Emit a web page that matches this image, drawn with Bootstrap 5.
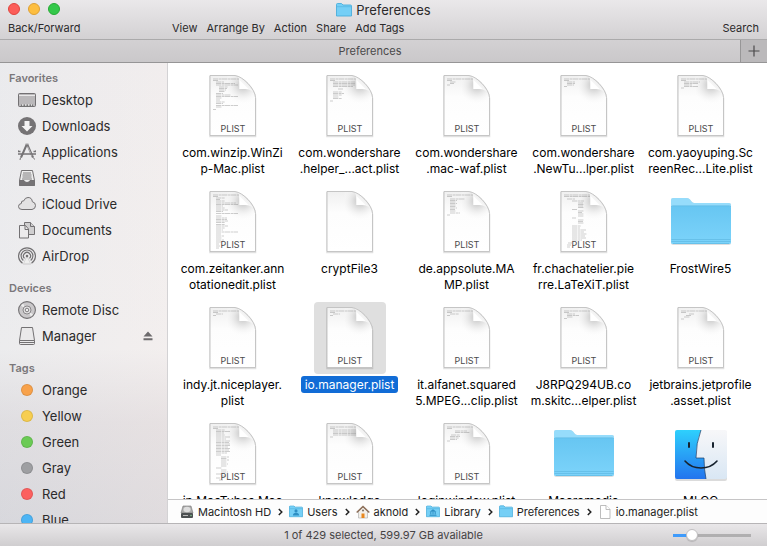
<!DOCTYPE html>
<html lang="en">
<head>
<meta charset="utf-8">
<meta name="viewport" content="width=device-width, initial-scale=1">
<title>Preferences</title>
<link href="https://cdn.jsdelivr.net/npm/bootstrap@5.3.0/dist/css/bootstrap.min.css" rel="stylesheet">
<style>
body { font-family: Inter, "Liberation Sans", sans-serif; font-size: 12px; line-height: 16px; color: #000; background: #fff; }
button { font: inherit; color: inherit; border: 0; background: none; padding: 0; }
a { color: inherit; text-decoration: none; }
svg { display: block; flex: none; }
.titlebar { background: linear-gradient(#eae8ea, #d3d1d3); color: #2b2a2b; padding-bottom: 2px; }
.window-title { height: 19px; font-size: 13px; }
.lights { left: 8px; top: 3px; gap: 8px; }
.light { width: 12px; height: 12px; border-radius: 50%; border: 1px solid #e0443e; background: #fc5d59; }
.light.min { background: #fdbe40; border-color: #dea034; }
.light.max { background: #34c84a; border-color: #27aa35; }
.tools { height: 18px; padding: 0 8px; gap: 9px; font-size: 11px; }
.back-forward { width: 155px; }
.tabs { height: 24px; border-top: 1px solid #abaaab; border-bottom: 1px solid #969596; background: linear-gradient(#d3d1d3, #cac8ca); color: #4a494a; font-size: 11px; }
.add-tab { width: 27px; background: #bbb9bb; border-left: 1px solid #979697; }
.sidebar { width: 168px; padding-top: 6px; border-right: 1px solid #d3d2d4; color: #2b2a2b; font-size: 13px;
  background: linear-gradient(90deg, rgba(214,218,226,.22), rgba(245,232,230,.25)), linear-gradient(#f0eff0 0, #f2f1f1 62%, #e2dfe1 78%, #d8d7db 100%); }
.sidebar h2 { font-size: 11px; line-height: 18px; font-weight: 600; color: #7a777a; margin: 0; padding-left: 9px; }
.sidebar ul + h2 { margin-top: 10px; }
.sidebar li { height: 26px; padding: 0 14px 0 18px; }
.sidebar a { gap: 6px; height: 26px; }
.tag-dot { width: 12px; height: 12px; margin: 0 3px; border-radius: 50%; border: 1px solid rgba(0,0,0,.1); }
.orange { background: #f8a24b; } .yellow { background: #f7ce50; } .green { background: #6bcb55; }
.gray { background: #9e9fa2; } .red { background: #fc605f; } .blue { background: #4db5f5; }
.files { display: grid; grid-template-columns: repeat(5, 1fr); grid-auto-rows: 116px; padding: 7px 8px 0 6px; }
.file { display: flex; flex-direction: column; align-items: center; text-align: center; }
.thumb { width: 72px; height: 72px; border-radius: 4px; padding-top: 4px; display: flex; justify-content: center; align-items: flex-start; margin-bottom: 2px; }
.thumb.low { padding-top: 12px; }
.label { padding: 1px 4px 0; white-space: nowrap; border-radius: 3px; }
.selected .thumb { background: #dfdfdf; }
.selected .label { background: #116cd6; color: #fff; }
.pathbar { height: 24px; border-top: 1px solid #c6c5c6; background: #fdfdfd; padding: 0 12px; font-size: 11px; color: #232323; }
.crumb { gap: 4px; }
.chev { margin: 0 6px 0 7px; }
.status { height: 23px; border-top: 1px solid #b6b4b6; background: linear-gradient(#e9e7e9, #d0ced0); font-size: 11px; color: #454345; padding: 0 16px; }
.zoom-slider { appearance: none; -webkit-appearance: none; width: 78px; height: 14px; margin: 0; background: linear-gradient(#3f9bfb, #3f9bfb) 0 50% / 20px 3px no-repeat, linear-gradient(#b0afb0, #b0afb0) 0 50% / 100% 3px no-repeat; }
.zoom-slider::-webkit-slider-thumb { -webkit-appearance: none; width: 12px; height: 12px; border-radius: 50%; background: #fff; border: 1px solid #c2c0c2; box-shadow: 0 1px 1px rgba(0,0,0,.15); }
.txt { stroke: #777; stroke-width: .6; stroke-dasharray: 5 .6 3 .4; fill: none; opacity: .6; }
.ext { font-size: 9px; fill: #4a4a4a; text-anchor: middle; }
</style>
<script src="https://cdn.jsdelivr.net/npm/bootstrap@5.3.0/dist/js/bootstrap.bundle.min.js"></script>
</head>
<body class="vh-100 d-flex flex-column overflow-hidden">

<svg width="0" height="0" class="position-absolute" aria-hidden="true">
  <defs>
    <linearGradient id="gPage" x1="0" y1="0" x2="0" y2="1"><stop offset="0" stop-color="#f0f0f0"/><stop offset=".35" stop-color="#fdfdfd"/><stop offset="1" stop-color="#fff"/></linearGradient>
    <radialGradient id="gCurl" gradientUnits="userSpaceOnUse" cx="34" cy="11" r="20"><stop offset="0" stop-color="#c2c2c2"/><stop offset=".4" stop-color="#e4e4e4"/><stop offset="1" stop-color="#fff" stop-opacity="0"/></radialGradient>
    <linearGradient id="gFold" x1="0" y1="1" x2="1" y2="0"><stop offset="0" stop-color="#fff"/><stop offset=".5" stop-color="#f4f4f4"/><stop offset="1" stop-color="#ccc"/></linearGradient>
    <linearGradient id="gFolder" x1="0" y1="0" x2="0" y2="1"><stop offset="0" stop-color="#67c6f2"/><stop offset="1" stop-color="#7cd3fa"/></linearGradient>
    <linearGradient id="gFace" x1="0" y1="0" x2="0" y2="1"><stop offset="0" stop-color="#2ed0fd"/><stop offset="1" stop-color="#2374ee"/></linearGradient>
    <linearGradient id="gFaceR" x1="0" y1="0" x2="0" y2="1"><stop offset="0" stop-color="#f7f7f9"/><stop offset="1" stop-color="#d9e7f4"/></linearGradient>
  </defs>
  <symbol id="page" viewBox="0 0 48 64">
    <path d="M1 2.500h25c8 1 20 13 20.500 22v38h-45.500z" fill="none" stroke="#000" stroke-opacity=".12" stroke-width="1.600"/>
    <path d="M1 1.500h25c8 1 20 13 20.500 22v38h-45.500z" fill="url(#gPage)"/>
    <path d="M1 1.500h25c8 1 20 13 20.500 22v12h-28v-34z" fill="url(#gCurl)"/>
    <path d="M28.500 2c2 2 2 8 2 13 5-.5 10 0 14 3-3-6-10-14-16-16z" fill="url(#gFold)"/>
    <path d="M30.500 6v9h9z" fill="#fff"/>
    <path d="M1 1.500h25c8 1 20 13 20.500 22v38h-45.500z" fill="none" stroke="#c0c0c0" stroke-width=".9"/>
  </symbol>
  <symbol id="folder" viewBox="0 0 60 48">
    <path d="M0 45V2q0-2 2-2h14q2 0 3 1.500l2 2.500q1 1 2.500 1H58q2 0 2 2v38q0 2-2 2H2q-2 0-2-2z" fill="#000" opacity=".13"/>
    <path d="M0 44V2q0-2 2-2h14q2 0 3 1.500l2 2.500q1 1 2.500 1H58q2 0 2 2v37q0 2-2 2H2q-2 0-2-2z" fill="#96dcfb"/>
    <path d="M0 44V9.500Q0 8 2 8h56q2 0 2 1.500V44q0 2-2 2H2q-2 0-2-2z" fill="url(#gFolder)"/>
    <path d="M0 9q.500-1.200 2-1.200h56q1.500 0 2 1.200M.500 41.500h59M.500 43.500h59M2 45.500h56" fill="none" stroke="#5eb9e2" stroke-width=".7"/>
  </symbol>
  <symbol id="smallFolder" viewBox="0 0 16 14">
    <path d="M.5 13V1.500Q.5.500 1.500.500h4l1.500 1.500h7.500q1 0 1 1v10z" fill="#75cff6" stroke="#4aaedb" stroke-width=".9"/>
    <path d="M1 3.700h14" stroke="#57b7e2" stroke-width=".8"/>
  </symbol>
  <symbol id="chevron" viewBox="0 0 5 8"><path d="M.8 1l3 3-3 3" fill="none" stroke="#222" stroke-width="1.500"/></symbol>
</svg>

<header class="titlebar flex-shrink-0">
  <div class="window-title position-relative d-flex justify-content-center align-items-center gap-1">
    <div class="lights position-absolute d-flex">
      <button class="light" aria-label="Close"></button><button class="light min" aria-label="Minimize"></button><button class="light max" aria-label="Zoom"></button>
    </div>
    <svg width="16" height="14"><use href="#smallFolder"/></svg>
    <span>Preferences</span>
  </div>
  <div class="tools d-flex align-items-center">
    <button class="back-forward text-start">Back/Forward</button>
    <button>View</button><button>Arrange By</button><button>Action</button><button>Share</button><button>Add Tags</button>
    <button class="ms-auto">Search</button>
  </div>
</header>

<div class="tabs d-flex flex-shrink-0">
  <button class="flex-grow-1">Preferences</button>
  <button class="add-tab d-flex align-items-center justify-content-center" aria-label="New tab"><svg width="12" height="12"><path d="M6 .5v11M.5 6h11" stroke="#4b4a4b" stroke-width="1.200"/></svg></button>
</div>

<div class="d-flex flex-grow-1 overflow-hidden">
  <nav class="sidebar flex-shrink-0 overflow-hidden">
    <h2>Favorites</h2>
    <ul class="list-unstyled mb-0">
      <li><a href="#" class="d-flex align-items-center"><svg width="18" height="18" fill="none" stroke="#737173"><rect x=".5" y="2.500" width="17" height="13" rx="1" fill="#bab8ba"/><path d="M1 4.500h16" stroke="#e9e8e9"/><path d="M3 13.500h12v2h-12z" fill="#777" stroke="none"/><path d="M4 14h1.500M7 14h1.500M10 14h1.500M13 14h1" stroke="#eee" stroke-width="1.600"/></svg>Desktop</a></li>
      <li><a href="#" class="d-flex align-items-center"><svg width="18" height="18"><circle cx="9" cy="9" r="9" fill="#757375"/><path d="M6.500 4h5v5h3L9 14.500 3.500 9h3z" fill="#f4f3f4"/></svg>Downloads</a></li>
      <li><a href="#" class="d-flex align-items-center"><svg width="18" height="18" fill="none" stroke="#757375"><path d="M8.500 2L3 14.500M9.500 2L15 14.500" stroke-width="2"/><path d="M9.700 3.500l4.300 9.500" stroke="#dddcdd" stroke-width=".6"/><path d="M0 8.500h2.500M15.500 8.500H18M0 11h18" stroke-width="1.300"/><path d="M.5 7.500L2 9M17.500 7.500L16 9M7.500 1.200h3M2.500 14.500l-.5 2.500M15.500 14.500l1 2"/></svg>Applications</a></li>
      <li><a href="#" class="d-flex align-items-center"><svg width="18" height="18" fill="none" stroke="#737173"><path d="M3.500 1.500h11l2 10v4.500q0 .5-.5.500h-14q-.5 0-.5-.5V11.500z" fill="#eee"/><path d="M1.500 11.500H6q.5 2 3 2t3-2h4.500v5h-15z" fill="#757375"/><path d="M5 4h8M4.500 6h9M4.500 8h9M4 10h10" stroke-width=".9"/></svg>Recents</a></li>
      <li><a href="#" class="d-flex align-items-center"><svg width="18" height="18" fill="#e3e2e3" stroke="#737173"><path d="M4 14.500Q.5 14.500.5 11.500q0-2.600 2.800-3Q3 5.500 5.800 5.800 7 2.500 10 2.500q4 0 4.300 4.200 3.200.6 3.200 3.900 0 3.400-3.500 3.900z"/></svg>iCloud Drive</a></li>
      <li><a href="#" class="d-flex align-items-center"><svg width="18" height="18" fill="#d0cfd0" stroke="#737173"><path d="M6.500 1.500h6l4 4v8h-10z"/><path d="M12.500 1.500v4h4"/><path d="M1.500 4.500h6l3 3.500v9h-9z" fill="#ecebec"/><path d="M7 4.500v4h3.500" fill="none"/></svg>Documents</a></li>
      <li><a href="#" class="d-flex align-items-center"><svg width="18" height="18" fill="none" stroke="#737173" stroke-width="1.200"><path d="M4.500 16.300a8.400 8.400 0 1 1 9 0M5.300 13.500a5.900 5.900 0 1 1 7.400 0M6.500 11.400a3.500 3.500 0 1 1 5 0"/><path d="M9 8l-4 9.500h8z" fill="#c9c8c9" stroke="none"/><path d="M9 10L5.800 16.500h6.400z" fill="#eee" stroke="none"/><circle cx="9" cy="9" r="1.300" fill="#737173" stroke="none"/></svg>AirDrop</a></li>
    </ul>
    <h2>Devices</h2>
    <ul class="list-unstyled mb-0">
      <li><a href="#" class="d-flex align-items-center"><svg width="18" height="18" fill="none" stroke="#737173"><circle cx="9" cy="9" r="8.400" fill="#cac8ca" stroke-width="1.100"/><path d="M9 9L3 4.500 5 2.500zM9 9l6 4.500-2 2z" fill="#eee" stroke="none"/><circle cx="9" cy="9" r="4" fill="#e5e4e5" stroke-width=".8"/><circle cx="9" cy="9" r="1.800" fill="#eee" stroke-width=".9"/></svg>Remote Disc</a></li>
      <li class="d-flex align-items-center justify-content-between"><a href="#" class="d-flex align-items-center"><svg width="18" height="18" fill="#eae9ea" stroke="#737173"><path d="M3.500.500h11l2 13v3q0 1-1 1h-13q-1 0-1-1v-3z"/><path d="M1.500 13.500h15M2 15.500h14" fill="none"/></svg>Manager</a><button aria-label="Eject Manager"><svg width="10" height="10" fill="#6d6b6d"><path d="M5 .5L9.500 5.500h-9zM.5 7.300h9v2h-9z"/></svg></button></li>
    </ul>
    <h2>Tags</h2>
    <ul class="list-unstyled mb-0">
      <li><a href="#" class="d-flex align-items-center"><span class="tag-dot orange"></span>Orange</a></li>
      <li><a href="#" class="d-flex align-items-center"><span class="tag-dot yellow"></span>Yellow</a></li>
      <li><a href="#" class="d-flex align-items-center"><span class="tag-dot green"></span>Green</a></li>
      <li><a href="#" class="d-flex align-items-center"><span class="tag-dot gray"></span>Gray</a></li>
      <li><a href="#" class="d-flex align-items-center"><span class="tag-dot red"></span>Red</a></li>
      <li><a href="#" class="d-flex align-items-center"><span class="tag-dot blue"></span>Blue</a></li>
    </ul>
  </nav>

  <main class="flex-grow-1 d-flex flex-column overflow-hidden">
    <div class="files flex-grow-1 overflow-hidden">
      <a href="#" class="file"><span class="thumb"><svg width="48" height="64"><use href="#page"/><path class="txt" d="M4 5h26M4 6.500h5M7 8h8M7 9.500h19M7 11h22M10 13h9M10 14.500h8M10 16h7M10 17.500h6M7 19.500h7M7 21h15M7 22.500h22M7 24h6M7 26h4M7 28h9M7 29.500h7M7 31.500h22M7 33h6M4 35.500h3"/><text class="ext" x="24" y="58">PLIST</text></svg></span><span class="label">com.winzip.WinZi<br>p-Mac.plist</span></a>
      <a href="#" class="file"><span class="thumb"><svg width="48" height="64"><use href="#page"/><path class="txt" d="M4 5h26M4 6.500h5M7 8h22M7 9.500h22M7 11h22M7 12.500h20M12 15h5M7 18h9M7 19.500h11M7 21h9M7 23h6M7 24.500h9M4 27h3"/><text class="ext" x="24" y="58">PLIST</text></svg></span><span class="label">com.wondershare<br>.helper_...act.plist</span></a>
      <a href="#" class="file"><span class="thumb"><svg width="48" height="64"><use href="#page"/><path class="txt" d="M4 5h26M4 6.500h5M7 8h6M7 9.500h4M4 11h3"/><text class="ext" x="24" y="58">PLIST</text></svg></span><span class="label">com.wondershare<br>.mac-waf.plist</span></a>
      <a href="#" class="file"><span class="thumb"><svg width="48" height="64"><use href="#page"/><path class="txt" d="M4 5h26M4 6.500h5M7 8h8M7 9.500h8M7 11h7M4 12.500h3"/><text class="ext" x="24" y="58">PLIST</text></svg></span><span class="label">com.wondershare<br>.NewTu...lper.plist</span></a>
      <a href="#" class="file"><span class="thumb"><svg width="48" height="64"><use href="#page"/><path class="txt" d="M4 5h26M4 6.500h5M7 8h16M7 9.500h14M7 11h8M7 12.500h14M4 14h3"/><text class="ext" x="24" y="58">PLIST</text></svg></span><span class="label">com.yaoyuping.Sc<br>reenRec...Lite.plist</span></a>

      <a href="#" class="file"><span class="thumb"><svg width="48" height="64"><use href="#page"/><path class="txt" d="M4 5h26M4 6.500h5M7 8h9M7 9.500h4M7 11h9M7 13h20M7 14.500h22M7 16h7M7 18h9M7 20h12M7 21.500h7M7 23.500h22M7 26h6M7 28h11M7 29.500h11M7 31h12M7 32.500h9M7 34.500h9M7 36h12M7 38h9M7 40h7M7 42h22M7 44h5M7 46h8M7 48h6M7 50h8M7 52h5M7 54h3M7 56h4M7 58h3"/><text class="ext" x="24" y="58">PLIST</text></svg></span><span class="label">com.zeitanker.ann<br>otationedit.plist</span></a>
      <a href="#" class="file"><span class="thumb"><svg width="48" height="64"><use href="#page"/></svg></span><span class="label">cryptFile3</span></a>
      <a href="#" class="file"><span class="thumb"><svg width="48" height="64"><use href="#page"/><path class="txt" d="M4 5h26M4 6.500h5M7 9h15M7 10.500h7M7 12h6M7 13.500h7M7 15h6M7 16.500h6M7 18h7M7 19.500h5M7 21h6M7 23h10M4 25h3"/><text class="ext" x="24" y="58">PLIST</text></svg></span><span class="label">de.appsolute.MA<br>MP.plist</span></a>
      <a href="#" class="file"><span class="thumb"><svg width="48" height="64"><use href="#page"/><path class="txt" d="M4 5h26M4 6.500h26M7 9h8M12 11h12M18 13h5M18 14.500h6M18 16h5M18 17.500h6M12 19.500h5M18 21h6M18 22.500h4M18 24h6M18 26h6M12 28h4M18 30h6M18 31.500h5M18 33h6M12 36h9M12 38h8M12 40h14M12 42h12M12 44h15M12 46h13M12 48h14M12 50h10M8 53h4M7 55h4M7 57h3"/><text class="ext" x="24" y="58">PLIST</text></svg></span><span class="label">fr.chachatelier.pie<br>rre.LaTeXiT.plist</span></a>
      <a href="#" class="file"><span class="thumb low"><svg width="60" height="48"><use href="#folder"/></svg></span><span class="label">FrostWire5</span></a>

      <a href="#" class="file"><span class="thumb"><svg width="48" height="64"><use href="#page"/><path class="txt" d="M4 5h26M4 6.500h5M7 8h7M4 9.500h3"/><text class="ext" x="24" y="58">PLIST</text></svg></span><span class="label">indy.jt.niceplayer.<br>plist</span></a>
      <a href="#" class="file selected"><span class="thumb"><svg width="48" height="64"><use href="#page"/><path class="txt" d="M4 5h26M4 6.500h5M7 8h7M4 9.500h3"/><text class="ext" x="24" y="58">PLIST</text></svg></span><span class="label">io.manager.plist</span></a>
      <a href="#" class="file"><span class="thumb"><svg width="48" height="64"><use href="#page"/><path class="txt" d="M4 5h26M4 6.500h5M7 8h9M4 9.500h3"/><text class="ext" x="24" y="58">PLIST</text></svg></span><span class="label">it.alfanet.squared<br>5.MPEG...clip.plist</span></a>
      <a href="#" class="file"><span class="thumb"><svg width="48" height="64"><use href="#page"/><path class="txt" d="M4 5h26M4 6.500h5M7 8h8M7 9.500h12M7 11h6M4 12.500h3"/><text class="ext" x="24" y="58">PLIST</text></svg></span><span class="label">J8RPQ294UB.co<br>m.skitc...elper.plist</span></a>
      <a href="#" class="file"><span class="thumb"><svg width="48" height="64"><use href="#page"/><path class="txt" d="M4 5h26M4 6.500h5M12 8h5M9 9.500h5M7 11h6M4 13h3"/><text class="ext" x="24" y="58">PLIST</text></svg></span><span class="label">jetbrains.jetprofile<br>.asset.plist</span></a>

      <a href="#" class="file"><span class="thumb"><svg width="48" height="64"><use href="#page"/><path class="txt" d="M4 5h26M4 6.500h5M7 8h9M7 9.500h14M7 11h8M7 13h9M7 15h14M7 17h10M7 19h14M7 20.500h13M7 22h14M7 23.500h14M7 25h12M7 26.500h14M7 28h13M7 29.500h14M7 31h11M7 33h5M12 35h8M12 36.500h6M12 38h8M12 40h6M12 42h7M12 44h6M7 46h6M12 48h6M12 50h7M7 52h5M12 54h5M7 56h4M10 58h4"/><text class="ext" x="24" y="58">PLIST</text></svg></span><span class="label">jp.MacTubes.Mac</span></a>
      <a href="#" class="file"><span class="thumb"><svg width="48" height="64"><use href="#page"/><path class="txt" d="M4 5h26M4 6.500h5M7 8h23M7 10h23M7 11.500h23M7 13h23M4 15h3"/><text class="ext" x="24" y="58">PLIST</text></svg></span><span class="label">knowledge</span></a>
      <a href="#" class="file"><span class="thumb"><svg width="48" height="64"><use href="#page"/><path class="txt" d="M4 5h26M4 6.500h5M12 9h12M12 10.500h15M8 13h9M7 14.500h10M7 16h9M7 17.500h7M4 19h3"/><text class="ext" x="24" y="58">PLIST</text></svg></span><span class="label">loginwindow.plist</span></a>
      <a href="#" class="file"><span class="thumb low"><svg width="60" height="48"><use href="#folder"/></svg></span><span class="label">Macromedia</span></a>
      <a href="#" class="file"><span class="thumb low"><svg width="54" height="52"><rect x="1" y="1" width="52" height="50" rx="2" fill="#000" opacity=".14"/><rect x="1" y="0" width="52" height="49" rx="2" fill="url(#gFaceR)"/><path d="M27 0Q22 13 22 28h8q0 11 2 21H3q-2 0-2-2V2q0-2 2-2z" fill="url(#gFace)"/><path d="M27 0Q22 13 22 28h8q0 11 2 21" fill="none" stroke="#1d3e68" stroke-width=".7"/><path d="M15 13v4M39 13v4" stroke="#17222e" stroke-width="2" stroke-linecap="round"/><path d="M11 31q6 7 16 7t16-7" fill="none" stroke="#17222e" stroke-width="1.600" stroke-linecap="round"/></svg></span><span class="label">MLCC</span></a>
    </div>

    <nav class="pathbar d-flex align-items-center flex-shrink-0" aria-label="Path">
      <a href="#" class="crumb d-flex align-items-center"><svg width="14" height="14"><path d="M3 1h8l2 7H1z" fill="#aaa" stroke="#777" stroke-width=".6"/><ellipse cx="7" cy="4.500" rx="3.500" ry="2.700" fill="#ddd"/><rect x="1" y="8" width="12" height="5" rx="1" fill="#4c5052"/><path d="M3 10.500h5" stroke="#bbb"/><circle cx="11" cy="10.500" r=".7" fill="#8d9"/></svg>Macintosh HD</a>
      <svg class="chev" width="5" height="8"><use href="#chevron"/></svg>
      <a href="#" class="crumb d-flex align-items-center"><svg width="14" height="13" viewBox="0 0 16 14"><use href="#smallFolder"/><circle cx="8" cy="6.300" r="1.800" fill="#2e8fc4"/><path d="M4.500 11.500q0-3 3.500-3t3.500 3z" fill="#2e8fc4"/></svg>Users</a>
      <svg class="chev" width="5" height="8"><use href="#chevron"/></svg>
      <a href="#" class="crumb d-flex align-items-center"><svg width="14" height="14"><path d="M2.500 6v7h9V6L7 2z" fill="#f3efe8" stroke="#aaa" stroke-width=".6"/><path d="M.7 7.500L7 1.500l6.300 6" fill="none" stroke="#8c6e58" stroke-width="1.500"/><path d="M5.500 8.500h3V13h-3z" fill="#e8871e"/><circle cx="7" cy="5.500" r="1" fill="#7a6a60"/></svg>aknold</a>
      <svg class="chev" width="5" height="8"><use href="#chevron"/></svg>
      <a href="#" class="crumb d-flex align-items-center"><svg width="14" height="13" viewBox="0 0 16 14"><use href="#smallFolder"/><path d="M4 7.200L8 4.500l4 2.700zM4 10.700h8v1.100H4z" fill="#2e8fc4"/><path d="M5.500 7.500v3M8 7.500v3M10.500 7.500v3" stroke="#2e8fc4" stroke-width="1.200"/></svg>Library</a>
      <svg class="chev" width="5" height="8"><use href="#chevron"/></svg>
      <a href="#" class="crumb d-flex align-items-center"><svg width="14" height="13"><use href="#smallFolder"/></svg>Preferences</a>
      <svg class="chev" width="5" height="8"><use href="#chevron"/></svg>
      <a href="#" class="crumb d-flex align-items-center"><svg width="14" height="14" fill="#fff" stroke="#b5b5b5" stroke-width=".9"><path d="M2.500.500H8l4 4v9H2.500z"/><path d="M8 .5v4h4"/></svg>io.manager.plist</a>
    </nav>
  </main>
</div>

<footer class="status d-flex align-items-center flex-shrink-0">
  <span class="flex-grow-1 w-25"></span>
  <span class="text-nowrap">1 of 429 selected, 599.97 GB available</span>
  <span class="flex-grow-1 w-25 d-flex justify-content-end"><input type="range" class="zoom-slider" min="0" max="100" value="20" aria-label="Icon size"></span>
</footer>
</body>
</html>
